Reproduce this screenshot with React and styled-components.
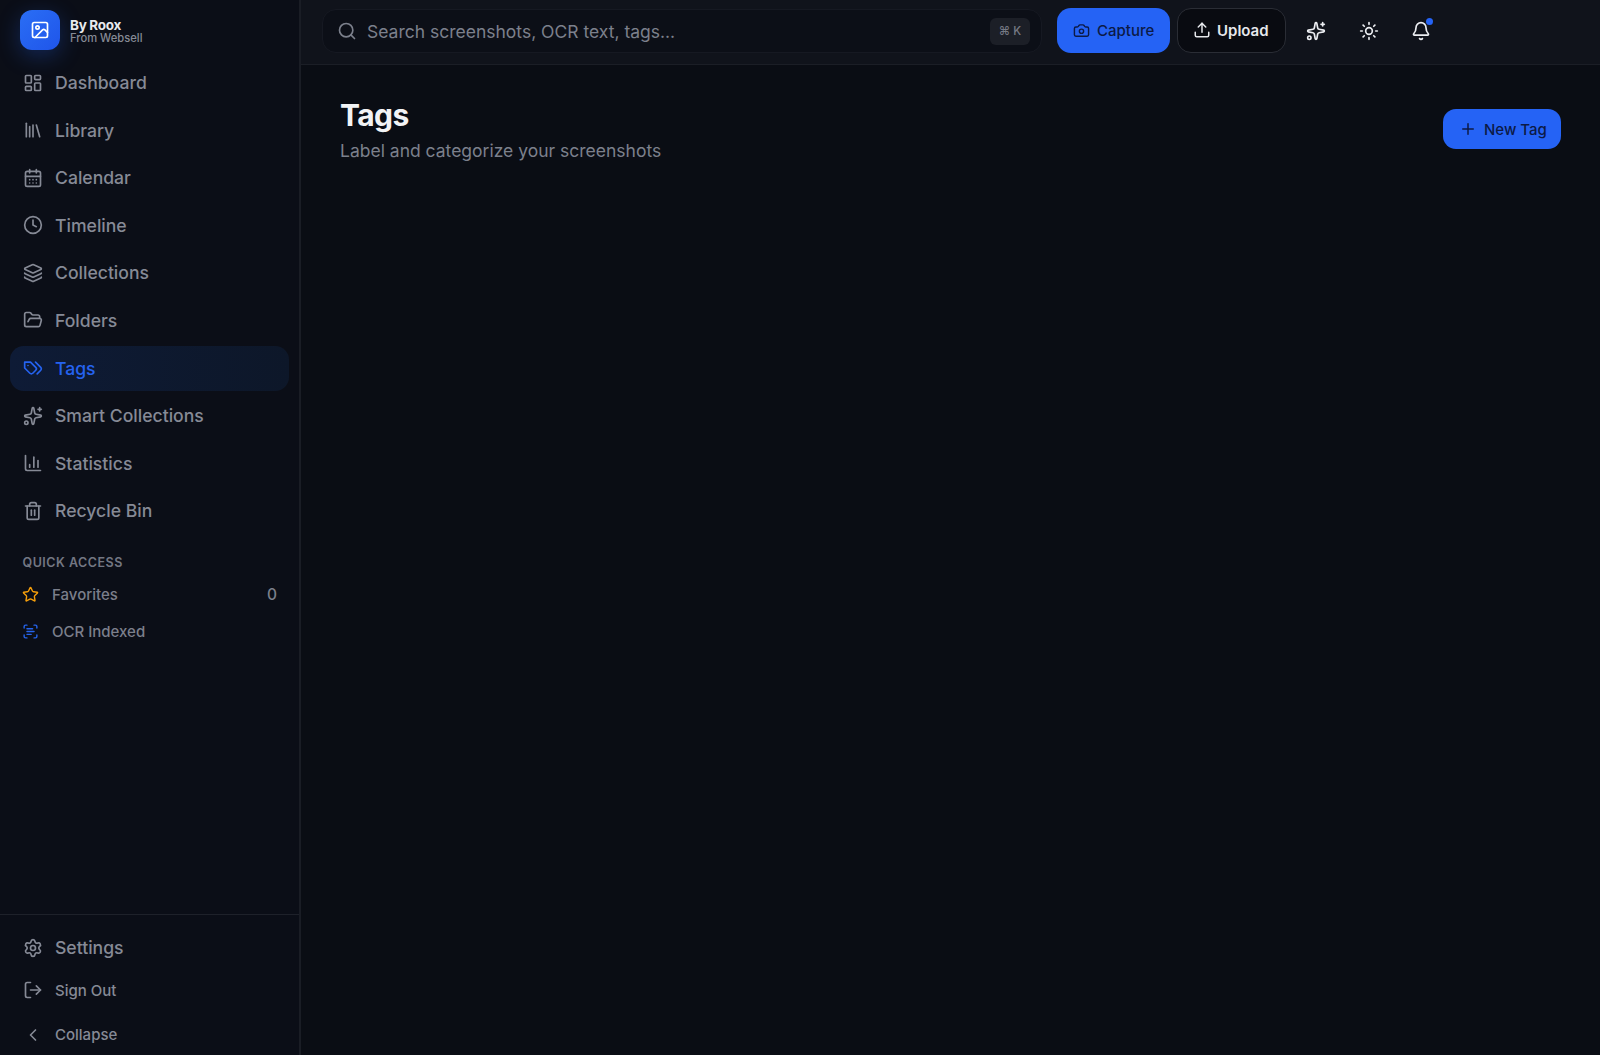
import React from "react";
import styled, { createGlobalStyle } from "styled-components";
import {
  LayoutDashboard, Library, CalendarDays, Clock, Layers, FolderOpen, Sparkles,
  ChartColumn, Trash2, Star, ScanText, Settings, LogOut, ChevronLeft, Search, Camera,
  Upload, Sun, Bell, Plus, Image,
} from "lucide-react";

const GlobalStyle = createGlobalStyle`
  html, body { margin: 0; padding: 0; background: #0a0d14; }
  body { font-family: Inter, "Liberation Sans", sans-serif; }
  * { box-sizing: border-box; }
  svg { flex: none; }
`;

const Shell = styled.div`
  display: flex;
  width: 1600px;
  height: 1055px;
  overflow: hidden;
  background: #0a0d14;
`;

const Sidebar = styled.aside`
  width: 301px;
  flex: none;
  display: flex;
  flex-direction: column;
  background: #0b0e17;
  border-right: 2px solid #1a1d25;
`;

const Brand = styled.div`
  display: flex;
  align-items: center;
  gap: 10px;
  padding: 0 20px;
  height: 60px;
`;

const LogoBox = styled.div`
  width: 40px;
  height: 40px;
  border-radius: 12px;
  display: flex;
  align-items: center;
  justify-content: center;
  color: #fff;
  background: linear-gradient(135deg, #2a6ef5, #1f55ea);
  box-shadow: 0 6px 22px rgba(37, 99, 235, 0.3);
`;

const BrandText = styled.div`
  display: flex;
  flex-direction: column;
  padding-top: 4px;
  line-height: 13px;
`;

const BrandName = styled.span`
  font-size: 13.5px;
  font-weight: 700;
  color: #e8eaee;
  letter-spacing: -0.3px;
`;

const BrandSub = styled.span`
  font-size: 11.2px;
  font-weight: 500;
  color: #868a95;
`;

const Nav = styled.nav`
  display: flex;
  flex-direction: column;
  gap: 2.6px;
  padding: 0 10px;
`;

const NavItem = styled.div`
  display: flex;
  align-items: center;
  gap: 12.5px;
  height: 45px;
  padding: 0 12.5px;
  border-radius: 14px;
  font-size: 17.6px;
  font-weight: 500;
  color: ${(p) => (p.$active ? "#2563f0" : "#868a96")};
  background: ${(p) => (p.$active ? "linear-gradient(90deg, #0e1b36, #0d1729)" : "transparent")};
`;

const SectionLabel = styled.div`
  margin: 22px 0 0 22.5px;
  font-size: 12.5px;
  font-weight: 600;
  letter-spacing: 0.5px;
  color: #737783;
`;

const Quick = styled.div`
  display: flex;
  flex-direction: column;
  padding: 5px 10px 0;
`;

const QuickItem = styled.div`
  display: flex;
  align-items: center;
  gap: 13px;
  height: 37.5px;
  padding: 0 12px;
  font-size: 15px;
  font-weight: 500;
  color: #7b7f8b;
`;

const Count = styled.span`
  margin-left: auto;
  font-size: 15.5px;
  color: #7b7f8b;
`;

const Footer = styled.div`
  margin-top: auto;
  border-top: 1px solid #1e212a;
  padding: 11px 10px 0;
  height: 141px;
  display: flex;
  flex-direction: column;
`;

const FootItem = styled.div`
  display: flex;
  flex: none;
  align-items: center;
  gap: 12.5px;
  height: ${(p) => p.$h}px;
  padding: ${(p) => p.$top || 0}px 12.5px 0;
  font-size: ${(p) => p.$size}px;
  font-weight: 500;
  color: #868a96;
`;

const Content = styled.div`
  flex: 1;
  display: flex;
  flex-direction: column;
  min-width: 0;
`;

const Topbar = styled.header`
  height: 65px;
  display: flex;
  align-items: center;
  padding: 0 0 2px 21px;
  background: #10131b;
  border-bottom: 1px solid #1b1e26;
`;

const SearchBox = styled.div`
  width: 720px;
  height: 44px;
  display: flex;
  align-items: center;
  gap: 10px;
  padding: 0 11px 0 14px;
  border-radius: 14px;
  background: #0c0f17;
  border: 1px solid #161922;
  font-size: 17.5px;
  color: #7c808c;
`;

const Kbd = styled.span`
  margin-left: auto;
  width: 40px;
  height: 27px;
  display: flex;
  align-items: center;
  justify-content: center;
  gap: 3px;
  border-radius: 6px;
  background: #1c1f27;
  font-size: 11.5px;
  font-weight: 500;
  color: #757984;
`;

const PrimaryButton = styled.button`
  display: flex;
  align-items: center;
  border: 0;
  font-family: inherit;
  font-weight: 500;
  font-size: 15px;
  white-space: nowrap;
  background: #2563f5;
  color: #0c1a45;
  gap: 7px;
  height: ${(p) => (p.$big ? 45 : 40)}px;
  padding: 0 16px;
  border-radius: ${(p) => (p.$big ? 14 : 13)}px;
`;

const CaptureButton = styled(PrimaryButton)`
  margin: 0 0 2px 15px;
  width: 113px;
`;

const UploadButton = styled.button`
  display: flex;
  align-items: center;
  gap: 6px;
  height: 45px;
  width: 109px;
  margin: 0 0 2px 7px;
  padding: 0 15px;
  border-radius: 14px;
  border: 1px solid #2a2d35;
  background: #090b11;
  font-family: inherit;
  font-size: 15px;
  font-weight: 600;
  color: #e6e8ec;
`;

const IconButton = styled.div`
  position: relative;
  width: 52.5px;
  height: 44px;
  display: flex;
  align-items: center;
  justify-content: center;
  color: #eceef2;
`;

const Dot = styled.span`
  position: absolute;
  top: 9px;
  right: 15px;
  width: 7px;
  height: 7px;
  border-radius: 50%;
  background: #2563f5;
`;

const IconRow = styled.div`
  display: flex;
  margin-left: 4px;
`;

const Main = styled.main`
  flex: 1;
  background: #0a0d14;
  display: flex;
  justify-content: space-between;
  align-items: flex-start;
  padding: 30px 39px 0 39px;
`;

const Title = styled.h1`
  margin: 0;
  font-size: 30px;
  line-height: 40px;
  font-weight: 700;
  letter-spacing: -0.6px;
  color: #f2f3f5;
`;

const Subtitle = styled.p`
  margin: 4px 0 0;
  font-size: 17.5px;
  line-height: 24px;
  color: #7c808c;
`;

const NewTagButton = styled(PrimaryButton)`
  margin-top: 14px;
  width: 118px;
`;

// lucide's current Tags glyph differs, the reference has the tag with a chevron behind it
const TagsIcon = ({ size }) => (
  <svg width={size} height={size} viewBox="0 0 24 24" fill="none" stroke="currentColor" strokeWidth="2" strokeLinecap="round" strokeLinejoin="round">
    <path d="M9 5H2v7l6.29 6.29c.94.94 2.48.94 3.42 0l3.58-3.58c.94-.94.94-2.48 0-3.42L9 5Z" />
    <path d="M6 9.01V9" />
    <path d="m15 5 6.3 6.3a2.4 2.4 0 0 1 0 3.4L17 19" />
  </svg>
);

const navItems = [
  ["Dashboard", LayoutDashboard],
  ["Library", Library],
  ["Calendar", CalendarDays],
  ["Timeline", Clock],
  ["Collections", Layers],
  ["Folders", FolderOpen],
  ["Tags", TagsIcon, true],
  ["Smart Collections", Sparkles],
  ["Statistics", ChartColumn],
  ["Recycle Bin", Trash2],
];

export default function App() {
  return (
    <Shell>
      <GlobalStyle />
      <Sidebar>
        <Brand>
          <LogoBox><Image size={20} /></LogoBox>
          <BrandText>
            <BrandName>By Roox</BrandName>
            <BrandSub>From Websell</BrandSub>
          </BrandText>
        </Brand>
        <Nav>
          {navItems.map(([label, Icon, active]) => (
            <NavItem key={label} $active={active}>
              <Icon size={20} />
              {label}
            </NavItem>
          ))}
        </Nav>
        <SectionLabel>QUICK ACCESS</SectionLabel>
        <Quick>
          <QuickItem>
            <Star size={17} color="#f59e0b" />
            Favorites
            <Count>0</Count>
          </QuickItem>
          <QuickItem>
            <ScanText size={17} color="#2563eb" />
            OCR Indexed
          </QuickItem>
        </Quick>
        <Footer>
          <FootItem $h={43} $size={17.6}><Settings size={20} />Settings</FootItem>
          <FootItem $h={42} $size={15}><LogOut size={20} />Sign Out</FootItem>
          <FootItem $h={44} $top={3} $size={15}><ChevronLeft size={20} />Collapse</FootItem>
        </Footer>
      </Sidebar>
      <Content>
        <Topbar>
          <SearchBox>
            <Search size={20} />
            Search screenshots, OCR text, tags...
            <Kbd><span>⌘</span><span>K</span></Kbd>
          </SearchBox>
          <CaptureButton $big><Camera size={17} />Capture</CaptureButton>
          <UploadButton><Upload size={18} />Upload</UploadButton>
          <IconRow>
            <IconButton><Sparkles size={20} /></IconButton>
            <IconButton><Sun size={20} /></IconButton>
            <IconButton><Bell size={20} /><Dot /></IconButton>
          </IconRow>
        </Topbar>
        <Main>
          <div>
            <Title>Tags</Title>
            <Subtitle>Label and categorize your screenshots</Subtitle>
          </div>
          <NewTagButton><Plus size={18} />New Tag</NewTagButton>
        </Main>
      </Content>
    </Shell>
  );
}
